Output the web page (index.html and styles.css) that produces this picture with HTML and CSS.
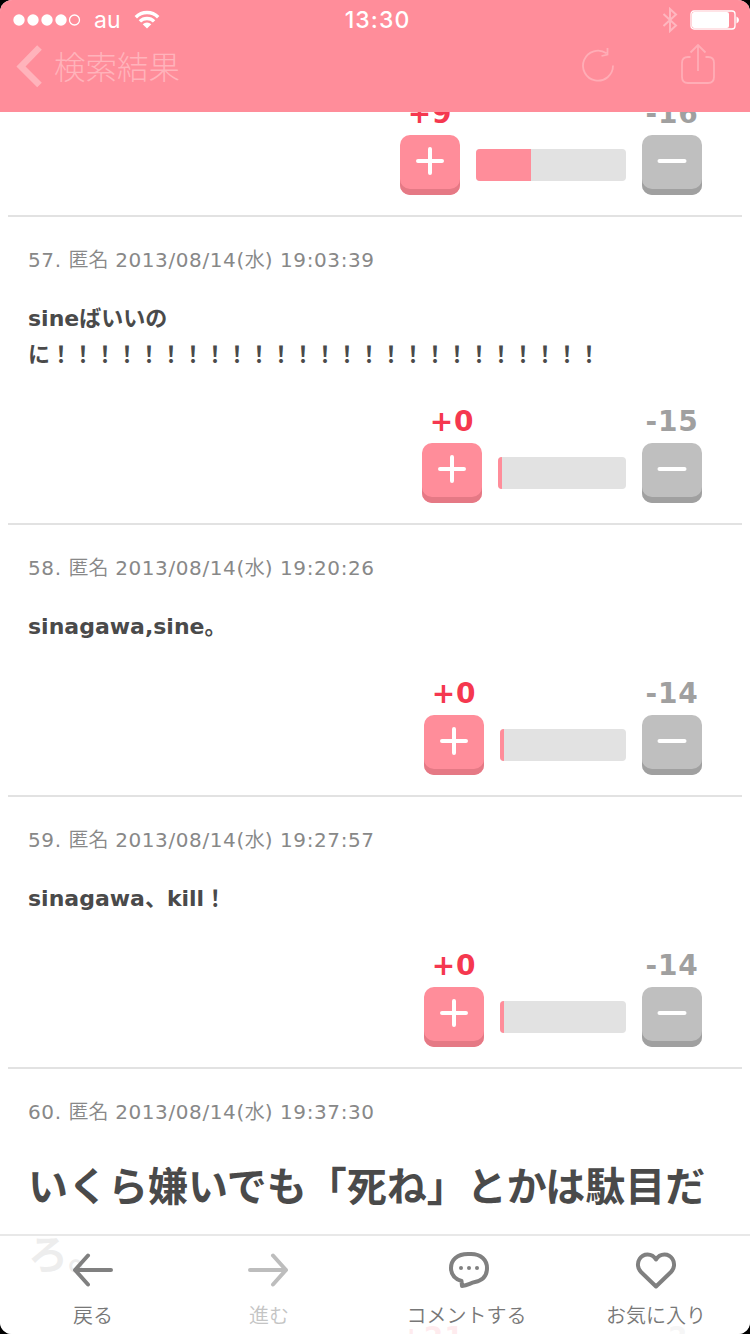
FILE: index.html
```html
<!DOCTYPE html>
<html lang="ja">
<head>
  <meta charset="UTF-8">
  <meta name="viewport" content="width=device-width, initial-scale=1.0">
  <title>検索結果</title>
  <link rel="stylesheet" href="styles.css">
</head>
<body>
  <!-- shared button icons -->
  <svg class="defs" width="0" height="0">
    <symbol id="plus" viewBox="0 0 30 30"><path d="M15 3v24M3 15h24"/></symbol>
    <symbol id="minus" viewBox="0 0 30 30"><path d="M2.500 15h25"/></symbol>
  </svg>

  <div class="screen">
    <header class="header">
      <div class="status">
        <div class="status-left">
          <svg class="signal" width="70" height="14" viewBox="0 0 70 14">
            <circle cx="7" cy="7" r="5.700"/><circle cx="21" cy="7" r="5.700"/><circle cx="35" cy="7" r="5.700"/><circle cx="49" cy="7" r="5.700"/>
            <circle class="empty" cx="62.500" cy="7" r="5"/>
          </svg>
          <span class="carrier">au</span>
          <svg class="wifi" width="26" height="20" viewBox="0 0 26 20">
            <path d="M1.800 7.200a15.800 15.800 0 0 1 22.400 0M5.900 11.400a10 10 0 0 1 14.200 0"/>
            <path class="dot" d="M13 18.500l-4.300-4.300a6 6 0 0 1 8.600 0z"/>
          </svg>
        </div>
        <span class="time">13:30</span>
        <div class="status-right">
          <svg class="bluetooth" width="18" height="26" viewBox="0 0 18 26">
            <path d="M2.500 7L15 18.500L9 24V2L15 7.500L2.500 19"/>
          </svg>
          <svg class="battery" width="50" height="20" viewBox="0 0 50 20">
            <rect class="case" x="1" y="1" width="44" height="18" rx="3"/>
            <rect x="2" y="2" width="37" height="16" rx="2"/>
            <path d="M46.500 6.500q2.500 1 2.500 3.500t-2.500 3.500z"/>
          </svg>
        </div>
      </div>
      <div class="nav">
        <svg class="chevron" width="28" height="44" viewBox="0 0 28 44"><path d="M24.500 3.500L6 22.500L24.500 41"/></svg>
        <span class="title">検索結果</span>
        <svg class="refresh" width="36" height="38" viewBox="0 0 36 38"><path d="M33 18.500a15 15 0 1 1-6.500-12.200M27.500 1v6.500l-6 1.500"/></svg>
        <svg class="share" width="36" height="44" viewBox="0 0 36 44"><path d="M10.500 13H8q-6 0-6 6v14q0 6 6 6h20q6 0 6-6V19q0-6-6-6h-2.500M18 27V1M10.500 8.500L18 1l7.500 7.500"/></svg>
      </div>
    </header>

    <main class="feed">
      <article class="comment first">
        <div class="votes">
          <div class="vote plus"><span>+9</span><button><svg><use href="#plus"/></svg></button></div>
          <div class="bar" style="width:150px"><i style="width:55px"></i></div>
          <div class="vote minus"><span>-16</span><button><svg><use href="#minus"/></svg></button></div>
        </div>
      </article>

      <article class="comment">
        <p class="meta">57. <b>匿名</b> 2013/08/14(<b>水</b>) 19:03:39</p>
        <p class="body">sineばいいのに！！！！！！！！！！！！！！！！！！！！！！！！！</p>
        <div class="votes">
          <div class="vote plus"><span>+0</span><button><svg><use href="#plus"/></svg></button></div>
          <div class="bar" style="width:128px"><i style="width:4px"></i></div>
          <div class="vote minus"><span>-15</span><button><svg><use href="#minus"/></svg></button></div>
        </div>
      </article>

      <article class="comment">
        <p class="meta">58. <b>匿名</b> 2013/08/14(<b>水</b>) 19:20:26</p>
        <p class="body">sinagawa,sine。</p>
        <div class="votes">
          <div class="vote plus"><span>+0</span><button><svg><use href="#plus"/></svg></button></div>
          <div class="bar" style="width:126px"><i style="width:4px"></i></div>
          <div class="vote minus"><span>-14</span><button><svg><use href="#minus"/></svg></button></div>
        </div>
      </article>

      <article class="comment">
        <p class="meta">59. <b>匿名</b> 2013/08/14(<b>水</b>) 19:27:57</p>
        <p class="body">sinagawa、kill！</p>
        <div class="votes">
          <div class="vote plus"><span>+0</span><button><svg><use href="#plus"/></svg></button></div>
          <div class="bar" style="width:126px"><i style="width:4px"></i></div>
          <div class="vote minus"><span>-14</span><button><svg><use href="#minus"/></svg></button></div>
        </div>
      </article>

      <article class="comment">
        <p class="meta">60. <b>匿名</b> 2013/08/14(<b>水</b>) 19:37:30</p>
        <p class="body large">いくら嫌いでも「死ね」とかは駄目だろ。</p>
        <div class="votes">
          <div class="vote plus"><span>+21</span><button><svg><use href="#plus"/></svg></button></div>
          <div class="bar" style="width:148px"><i style="width:130px"></i></div>
          <div class="vote minus"><span>-2</span><button><svg><use href="#minus"/></svg></button></div>
        </div>
      </article>
    </main>

    <nav class="tabbar">
      <a class="tab">
        <svg width="42" height="40" viewBox="0 0 42 40"><path d="M39 20H3M16 5.500L3 20l13 14.500"/></svg>
        <span>戻る</span>
      </a>
      <a class="tab disabled">
        <svg width="42" height="40" viewBox="0 0 42 40"><path d="M2 20h36M25 5.500L38 20L25 34.500"/></svg>
        <span>進む</span>
      </a>
      <a class="tab">
        <svg width="46" height="40" viewBox="0 0 46 40">
          <path d="M24 4h3c10 0 16 6 16 14 0 8-5 12.500-12 14-5 1-7 3.500-13 4l-.500-5C11 29 7 24.500 7 18 7 10 13 4 24 4z"/>
          <circle cx="17" cy="18" r="2"/><circle cx="25" cy="18" r="2"/><circle cx="33" cy="18" r="2"/>
        </svg>
        <span>コメントする</span>
      </a>
      <a class="tab">
        <svg width="42" height="40" viewBox="0 0 42 40"><path d="M21 36.500L6 22C2.500 18.500 2 13 4.500 9 8 3 17 2.500 21 9.500 25 2.500 34 3 37.500 9c2.500 4 2 9.500-1.500 13z"/></svg>
        <span>お気に入り</span>
      </a>
    </nav>
  </div>
</body>
</html>
```
FILE: styles.css
```css
html, body {
  margin: 0;
  padding: 0;
  background: #000;
}
body {
  font-family: "DejaVu Sans", "Noto Sans CJK JP", sans-serif;
}
p {
  margin: 0;
}
svg {
  display: block;
  flex: none;
}
.defs {
  position: absolute;
}
.screen {
  position: relative;
  display: flex;
  flex-direction: column;
  width: 750px;
  height: 1334px;
  border-radius: 12px;
  overflow: hidden;
  background: #fff;
}

/* Header */
.header {
  flex: none;
  height: 112px;
  background: #ff8d9a;
  color: #fff;
  z-index: 1;
}
.status {
  display: grid;
  grid-template-columns: 1fr auto 1fr;
  align-items: center;
  height: 40px;
  padding: 0 10px 0 12px;
  font-family: Inter, sans-serif;
}
.status-left, .status-right {
  display: flex;
  align-items: center;
}
.status-right {
  justify-content: flex-end;
  gap: 11px;
}
.signal, .wifi .dot, .battery {
  fill: #fff;
}
.signal .empty, .battery .case {
  fill: none;
  stroke: #fff;
  stroke-width: 1.3;
}
.carrier {
  width: 27px;
  margin: 0 13px 0 12px;
  font-size: 23px;
  line-height: 40px;
}
.wifi {
  fill: none;
  stroke: #fff;
  stroke-width: 3.4;
}
.wifi .dot {
  stroke: none;
}
.time {
  padding-left: 3px;
  font-size: 23px;
  font-weight: 500;
  line-height: 40px;
  letter-spacing: 1.1px;
}
.bluetooth {
  fill: none;
  stroke: #ffb6bf;
  stroke-width: 2;
}
.nav {
  display: flex;
  align-items: center;
  height: 52px;
  padding: 0 34px 0 15px;
}
.nav svg {
  fill: none;
  stroke: #ffadb6;
  stroke-width: 1.8;
}
.nav .chevron {
  stroke: #ffb3bb;
  stroke-width: 6.5;
}
.title {
  margin-left: 11px;
  font: 300 31.5px/50px "Noto Sans CJK JP", sans-serif;
  height: 52px;
  color: #ffb3bb;
}
.refresh {
  margin-left: auto;
}
.share {
  margin-left: 64px;
}

/* Comments */
.feed {
  flex: 1;
  min-height: 0;
  padding: 0 8px;
}
.comment {
  padding: 24px 20px 20px;
  border-bottom: 2px solid #e2e2e2;
}
/* the list is scrolled part way through this one */
.comment.first {
  margin-top: -19px;
  padding-top: 0;
}
.first .votes {
  margin-top: 0;
}
.meta {
  font-size: 20px;
  line-height: 36px;
  height: 36px;
  letter-spacing: 0.6px;
  color: #888;
}
.meta b {
  font-family: "Noto Sans CJK JP", sans-serif;
  font-weight: 350;
  letter-spacing: -0.2px;
}
.body {
  margin-top: 24px;
  font-size: 22px;
  font-weight: bold;
  line-height: 36px;
  color: #4a4a4a;
}
.body.large {
  font-size: 40px;
  line-height: 68px;
}
.votes {
  display: flex;
  justify-content: flex-end;
  align-items: flex-end;
  gap: 16px;
  margin: 28px 20px 0 0;
}
.vote {
  display: flex;
  flex-direction: column;
  align-items: center;
  gap: 2px;
  width: 60px;
}
.vote span {
  height: 40px;
  font-size: 28px;
  font-weight: bold;
  line-height: 42px;
  letter-spacing: 0.8px;
}
.vote button {
  display: flex;
  justify-content: center;
  width: 60px;
  height: 60px;
  padding: 11px 0 0;
  border: none;
  border-radius: 10px;
}
.vote svg {
  width: 30px;
  height: 30px;
  stroke: #fff;
  stroke-width: 4;
  stroke-linecap: round;
}
.plus span {
  color: #f5384f;
}
.plus button {
  background: #ff8d9a;
  box-shadow: inset 0 -6px #e57985;
}
.minus span {
  color: #a0a0a0;
}
.minus button {
  background: #bfbfbf;
  box-shadow: inset 0 -6px #a0a0a0;
}
.bar {
  height: 32px;
  margin-bottom: 14px;
  border-radius: 4px;
  overflow: hidden;
  background: #e2e2e2;
}
.bar i {
  display: block;
  height: 100%;
  background: #ff8d9a;
}

/* Bottom toolbar, the list shows faintly through it */
.tabbar {
  position: absolute;
  left: 0;
  right: 0;
  bottom: 0;
  display: grid;
  grid-template-columns: 186px 166px 229px 150px;
  box-sizing: border-box;
  height: 100px;
  border-top: 2px solid #e8e8e8;
  background: rgba(255, 255, 255, 0.9);
}
.tab {
  display: flex;
  flex-direction: column;
  align-items: center;
  padding-top: 14px;
  font: 350 20px/30px "Noto Sans CJK JP", sans-serif;
  color: #777;
}
.tab svg {
  fill: none;
  stroke: #808080;
  stroke-width: 4;
  stroke-linecap: round;
  stroke-linejoin: round;
}
.tab circle {
  fill: #808080;
  stroke: none;
}
.tab span {
  margin-top: 10px;
}
.tab.disabled {
  color: #c4c4c4;
}
.tab.disabled svg {
  stroke: #bdbdbd;
}
```
